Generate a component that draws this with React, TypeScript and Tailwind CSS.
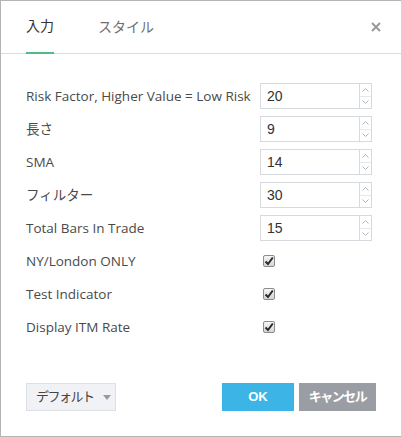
import { ReactNode } from 'react'

const font = { fontFamily: '"Liberation Sans", "Noto Sans CJK JP", sans-serif' }

interface NumberRow {
  label: string
  value: string
}

const numberRows: NumberRow[] = [
  { label: 'Risk Factor, Higher Value = Low Risk', value: '20' },
  { label: '長さ', value: '9' },
  { label: 'SMA', value: '14' },
  { label: 'フィルター', value: '30' },
  { label: 'Total Bars In Trade', value: '15' },
]

const checkRows = ['NY/London ONLY', 'Test Indicator', 'Display ITM Rate']

function Row({ label, children }: { label: string; children: ReactNode }) {
  return (
    <div className="flex h-[26px] items-center">
      <div
        className="w-[234px] shrink-0 whitespace-nowrap text-[13.5px] text-[#4a4a4a]"
        style={{ fontFamily: '"Open Sans", "Noto Sans CJK JP", sans-serif' }}
      >
        {label}
      </div>
      {children}
    </div>
  )
}

function Spinner({ value }: { value: string }) {
  return (
    <div className="flex h-[26px] w-[112px] border border-[#d6d9dd] bg-white">
      <div className="flex flex-1 items-center pl-[6px] text-[14px] text-[#333]">{value}</div>
      <div className="flex w-[12px] flex-col border-l border-[#d6d9dd]">
        <div className="flex flex-1 items-center justify-center border-b border-[#e6e9ec]">
          <svg width="7" height="4" viewBox="0 0 7 4">
            <path d="M0.5 3.5 L3.5 0.5 L6.5 3.5" fill="none" stroke="#aab6c2" strokeWidth="1" />
          </svg>
        </div>
        <div className="flex flex-1 items-center justify-center">
          <svg width="7" height="4" viewBox="0 0 7 4">
            <path d="M0.5 0.5 L3.5 3.5 L6.5 0.5" fill="none" stroke="#aab6c2" strokeWidth="1" />
          </svg>
        </div>
      </div>
    </div>
  )
}

function CheckBox() {
  return (
    <div className="ml-[3px] flex h-[12px] w-[12px] items-center justify-center rounded-[2px] border border-[#8c8c8c] bg-gradient-to-b from-[#f6f6f6] to-[#d6d6d6]">
      <svg width="10" height="10" viewBox="0 0 10 10">
        <path d="M1.5 5.5 L4 8 L8.8 1.5" fill="none" stroke="#2a2a2a" strokeWidth="2" />
      </svg>
    </div>
  )
}

export default function App() {
  return (
    <div
      className="flex h-[437px] w-[401px] flex-col border-t border-b border-l border-[#b4b4b4] bg-white"
      style={font}
    >
      <div className="flex h-[53px] items-stretch border-b border-[#dcdcdc] pl-[25px] pr-[20px]">
        <div className="-mb-px flex items-center border-b-2 border-[#53b987] text-[14px] text-[#333]">入力</div>
        <div className="ml-[44px] flex items-center text-[14px] text-[#6f6f6f]">スタイル</div>
        <div className="ml-auto flex items-center">
          <svg width="10" height="10" viewBox="0 0 10 10">
            <path d="M1 1 L9 9 M9 1 L1 9" stroke="#9a9a9a" strokeWidth="2" />
          </svg>
        </div>
      </div>

      <div className="flex flex-col gap-[7px] pl-[25px] pt-[29px]">
        {numberRows.map(r => (
          <Row key={r.label} label={r.label}>
            <Spinner value={r.value} />
          </Row>
        ))}
        {checkRows.map(label => (
          <Row key={label} label={label}>
            <CheckBox />
          </Row>
        ))}
      </div>

      <div className="mt-auto flex items-center pb-[25px] pl-[25px] pr-[25px]">
        <button
          type="button"
          className="flex h-[28px] w-[90px] shrink-0 items-center gap-[9px] whitespace-nowrap border border-[#dcdfe4] bg-[#f1f2f5] pl-[9px] text-[13px] tracking-[-1.5px] text-[#444]"
        >
          デフォルト
          <svg width="8" height="5" viewBox="0 0 8 5">
            <path d="M0 0 L8 0 L4 5 Z" fill="#9a9a9a" />
          </svg>
        </button>
        <button
          type="button"
          className="ml-auto flex h-[28px] w-[72px] items-center justify-center bg-[#3cb4e5] text-[13px] font-bold text-white"
        >
          OK
        </button>
        <button
          type="button"
          className="ml-[5px] flex h-[28px] w-[77px] items-center justify-center whitespace-nowrap bg-[#9b9da4] text-[13px] font-bold tracking-[-1.5px] text-white"
        >
          キャンセル
        </button>
      </div>
    </div>
  )
}
